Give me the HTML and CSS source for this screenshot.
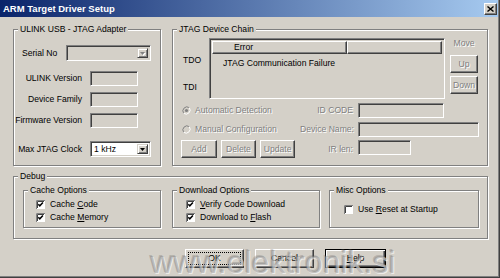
FILE: index.html
```html
<!DOCTYPE html>
<html>
<head>
<meta charset="utf-8">
<title>ARM Target Driver Setup</title>
<link rel="stylesheet" href="styles.css">
</head>
<body>
<svg class="sprite" width="0" height="0">
  <defs>
    <symbol id="cb-on" viewBox="0 0 9 9">
      <rect x="0" y="0" width="9" height="9" fill="#fff"/>
      <path d="M0.5 9V0.5H9" stroke="#808080" fill="none"/>
      <path d="M1.5 8V1.5H8" stroke="#404040" fill="none"/>
      <path d="M2.3 4.2L3.8 5.8L6.9 2.5" stroke="#000" stroke-width="1.5" fill="none"/>
    </symbol>
    <symbol id="cb-off" viewBox="0 0 9 9">
      <rect x="0" y="0" width="9" height="9" fill="#fff"/>
      <path d="M0.5 9V0.5H9" stroke="#808080" fill="none"/>
      <path d="M1.5 8V1.5H8" stroke="#404040" fill="none"/>
    </symbol>
    <symbol id="radio" viewBox="0 0 9 9">
      <circle cx="4.5" cy="4.5" r="4" fill="#d4d0c8"/>
      <path d="M1.7 7.3A4 4 0 0 1 7.3 1.7" stroke="#808080" fill="none"/>
      <path d="M7.3 1.7A4 4 0 0 1 1.7 7.3" stroke="#fff" fill="none"/>
    </symbol>
    <symbol id="arrow" viewBox="0 0 7 4">
      <path d="M0 0H7L3.5 4Z"/>
    </symbol>
  </defs>
</svg>
<div class="window">
  <div class="titlebar">
    <span class="title">ARM Target Driver Setup</span>
    <span class="close"><svg width="7" height="6" viewBox="0 0 7 6"><path d="M0.5 0.5L6.5 5.5M6.5 0.5L0.5 5.5" stroke="#000" stroke-width="1.4"/></svg></span>
  </div>
  <div class="content">
    <div class="toprow">
      <fieldset class="group g-ulink">
        <legend>ULINK USB - JTAG Adapter</legend>
        <div class="serial-row">
          <span class="lbl">Serial No</span>
          <span class="combo combo-dis w85"><span class="combo-btn"><svg class="arr arr-dis" width="5" height="3"><use href="#arrow"/></svg></span></span>
        </div>
        <div class="info-grid">
          <span class="rlbl">ULINK Version</span><span class="field"></span>
          <span class="rlbl">Device Family</span><span class="field"></span>
          <span class="rlbl">Firmware Version</span><span class="field"></span>
        </div>
        <div class="clock-row">
          <span class="rlbl">Max JTAG Clock</span>
          <span class="combo combo-on"><span class="combo-text">1 kHz</span><span class="combo-btn"><svg class="arr" width="5" height="3"><use href="#arrow"/></svg></span></span>
        </div>
      </fieldset>
      <fieldset class="group g-chain">
        <legend>JTAG Device Chain</legend>
        <div class="chain-top">
          <div class="tdo-col"><span>TDO</span><span class="tdi">TDI</span></div>
          <div class="listview">
            <div class="lv-head"><span class="lv-col lv-col1">Error</span><span class="lv-col lv-col2"></span></div>
            <div class="lv-row">JTAG Communication Failure</div>
          </div>
          <div class="move-col">
            <span class="dis">Move</span>
            <button class="btn dis move-up">Up</button>
            <button class="btn dis move-down">Down</button>
          </div>
        </div>
        <div class="chain-bottom">
          <span class="radio dis"><svg class="rd" width="9" height="9"><use href="#radio"/><circle cx="4.5" cy="4.5" r="1.6" fill="#808080"/></svg>Automatic Detection</span>
          <span class="rlbl dis">ID CODE</span>
          <span class="field f-end w86"></span>
          <span class="radio dis"><svg class="rd" width="9" height="9"><use href="#radio"/></svg>Manual Configuration</span>
          <span class="rlbl dis">Device Name:</span>
          <span class="field f-end w121"></span>
          <div class="btnrow">
            <button class="btn dis w39">Add</button>
            <button class="btn dis w39">Delete</button>
            <button class="btn dis w38">Update</button>
          </div>
          <span class="rlbl dis">IR len:</span>
          <span class="field f-start w53"></span>
        </div>
      </fieldset>
    </div>
    <fieldset class="group g-debug">
      <legend>Debug</legend>
      <div class="debug-row">
        <fieldset class="group sub g-cache">
          <legend>Cache Options</legend>
          <div class="cb-row first"><svg class="cb" width="9" height="9"><use href="#cb-on"/></svg><span>Cache <u>C</u>ode</span></div>
          <div class="cb-row"><svg class="cb" width="9" height="9"><use href="#cb-on"/></svg><span>Cache <u>M</u>emory</span></div>
        </fieldset>
        <fieldset class="group sub g-download">
          <legend>Download Options</legend>
          <div class="cb-row first"><svg class="cb" width="9" height="9"><use href="#cb-on"/></svg><span><u>V</u>erify Code Download</span></div>
          <div class="cb-row"><svg class="cb" width="9" height="9"><use href="#cb-on"/></svg><span>Download to <u>F</u>lash</span></div>
        </fieldset>
        <fieldset class="group sub g-misc">
          <legend>Misc Options</legend>
          <div class="cb-row misc"><svg class="cb" width="9" height="9"><use href="#cb-off"/></svg><span>Use <u>R</u>eset at Startup</span></div>
        </fieldset>
      </div>
    </fieldset>
    <div class="dlg-buttons">
      <button class="btn dlg focus">OK</button>
      <button class="btn dlg">Cancel</button>
      <button class="btn dlg help"><u>H</u>elp</button>
    </div>
  </div>
  <div class="watermark">www.elektronik.si</div>
</div>
</body>
</html>
```
FILE: styles.css
```css
* { box-sizing: border-box; }
body { margin: 0; background: #d4d0c8; }
.sprite { position: absolute; width: 0; height: 0; }

.window {
  position: relative;
  width: 500px;
  height: 278px;
  background: #d4d0c8;
  border-right: 1px solid #404040;
  border-bottom: 1px solid #404040;
  box-shadow: inset -1px -1px 0 #808080;
  font: 8.6px/11px "Liberation Sans", Arial, sans-serif;
  color: #000;
  display: flex;
  flex-direction: column;
  overflow: hidden;
}

.titlebar {
  flex: none;
  height: 17px;
  margin-right: 1px;
  display: flex;
  align-items: center;
  justify-content: space-between;
  padding: 0 1px 0 3px;
  background: linear-gradient(to right, #0a246a, #a6caf0);
}
.title { color: #fff; font-weight: bold; font-size: 9.5px; line-height: 12px; }
.close {
  width: 13px; height: 12px;
  background: #d4d0c8;
  border: 1px solid; border-color: #fff #404040 #404040 #fff;
  box-shadow: inset -1px -1px 0 #808080;
  display: flex; align-items: center; justify-content: center;
}
.close svg { display: block; }

.content { flex: 1; padding: 7px 11px 0 13px; }

.group {
  margin: 0; padding: 0;
  min-width: 0;
  border: 1px solid #808080;
  box-shadow: inset 1px 1px 0 #fff, 1px 1px 0 #fff;
}
.group legend {
  padding: 0 2px;
  margin-left: 4px;
  line-height: 11px;
  background: #d4d0c8;
}

.dis { color: #808080; text-shadow: 1px 1px 0 #fff; }

.toprow { display: flex; gap: 11px; height: 142px; }
.g-ulink { width: 148px; flex: none; }
.g-chain { flex: 1; }

/* sunken fields */
.field, .combo, .listview {
  border: 1px solid;
  border-color: #808080 #fff #fff #808080;
  box-shadow: inset 1px 1px 0 #404040, inset -1px -1px 0 #d4d0c8;
  background: #d4d0c8;
}
.field { height: 15px; display: block; }

.serial-row { display: flex; align-items: center; margin-top: 10px; padding-left: 8px; height: 16px; }
.serial-row .lbl { width: 44px; }

.combo { display: flex; align-items: stretch; height: 16px; padding: 2px; }
.w85 { width: 85px; }
.combo-on { background: #fff; }
.combo-text { flex: 1; padding-left: 1px; line-height: 11px; }
.combo-btn {
  margin-left: auto;
  width: 11px;
  background: #d4d0c8;
  border: 1px solid; border-color: #d4d0c8 #404040 #404040 #d4d0c8;
  box-shadow: inset 1px 1px 0 #fff, inset -1px -1px 0 #808080;
  display: flex; align-items: center; justify-content: center;
}
.arr { display: block; fill: #000; }
.arr-dis { fill: #808080; filter: drop-shadow(1px 1px 0 #fff); }

.rlbl { text-align: right; white-space: nowrap; }

.info-grid {
  display: grid;
  grid-template-columns: 68px 48px;
  column-gap: 8px;
  row-gap: 6px;
  grid-auto-rows: 15px;
  align-items: center;
  margin-top: 10px;
}
.clock-row {
  display: grid;
  grid-template-columns: 68px 61px;
  column-gap: 8px;
  grid-auto-rows: 16px;
  align-items: center;
  margin-top: 13px;
}

/* JTAG chain */
.chain-top { display: flex; margin-top: 3px; height: 61px; }
.tdo-col { width: 36px; padding: 17px 0 0 10px; display: flex; flex-direction: column; }
.tdo-col .tdi { margin-top: 16px; }
.listview { width: 236px; height: 61px; padding: 2px; }
.lv-head { display: flex; height: 13px; }
.lv-col {
  border: 1px solid; border-color: #fff #404040 #404040 #fff;
  box-shadow: inset -1px -1px 0 #808080;
  line-height: 10px;
}
.lv-col1 { width: 135px; padding-left: 21px; }
.lv-col2 { flex: 1; }
.lv-row { margin-top: 4px; padding-left: 11px; line-height: 11px; white-space: nowrap; }

.move-col { margin-left: 5px; width: 28px; display: flex; flex-direction: column; align-items: center; }

.btn {
  font: inherit;
  padding: 0;
  height: 18px;
  background: #d4d0c8;
  color: #000;
  border: 1px solid; border-color: #fff #404040 #404040 #fff;
  box-shadow: inset -1px -1px 0 #808080;
  line-height: 11px;
}
.btn.dis { color: #808080; }
.move-up { width: 28px; margin-top: 6px; }
.move-down { width: 28px; margin-top: 3px; }

.chain-bottom {
  display: grid;
  grid-template-columns: 114px 53px 121px;
  grid-template-rows: 15px 16px 18px;
  column-gap: 5px;
  row-gap: 3px;
  margin-top: 4px;
  padding-left: 8px;
  align-items: center;
}
.radio { display: flex; align-items: center; gap: 4px; white-space: nowrap; margin-left: 1px; }
.rd { display: block; flex: none; }
.f-end { align-self: end; }
.f-start { align-self: start; }
.w86 { width: 86px; }
.w121 { width: 121px; }
.w53 { width: 53px; }
.btnrow { display: flex; gap: 4px; }
.w39 { width: 39px; }
.w38 { width: 38px; }

/* Debug */
.g-debug { margin-top: 5px; }
.debug-row { display: flex; margin-top: 3px; padding: 0 0 10px 9px; }
.sub { height: 43px; flex: none; }
.g-cache { width: 138px; }
.g-download { width: 148px; margin-left: 11px; }
.g-misc { width: 150px; margin-left: 9px; }
.g-cache .cb-row { padding-left: 12px; }
.g-download .cb-row { padding-left: 13px; }
.g-misc .cb-row { padding-left: 14px; }
.cb-row { display: flex; align-items: center; gap: 5px; height: 13px; white-space: nowrap; }
.cb-row.first { margin-top: 2px; }
.cb-row.misc { margin-top: 7px; }
.cb { display: block; flex: none; }

/* dialog buttons */
.dlg-buttons { display: flex; margin-top: 10px; padding-left: 172px; }
.dlg { width: 59px; height: 19px; }
.dlg + .dlg { margin-left: 11px; }
.focus { outline: 1px dotted #000; outline-offset: -4px; }
.help {
  margin-left: auto;
  width: 61px;
  border: 1px solid #000;
  box-shadow: inset 1px 1px 0 #fff, inset -1px -1px 0 #404040, inset -2px -2px 0 #808080;
}

.watermark {
  position: absolute;
  left: 150px;
  top: 248px;
  font: 32px/28px "Liberation Sans", Arial, sans-serif;
  color: rgba(140, 140, 140, 0.45);
  text-shadow: 1px 1px 0 rgba(255, 255, 255, 0.6), -1px -1px 0 rgba(90, 90, 90, 0.25);
  white-space: nowrap;
  pointer-events: none;
}
```
